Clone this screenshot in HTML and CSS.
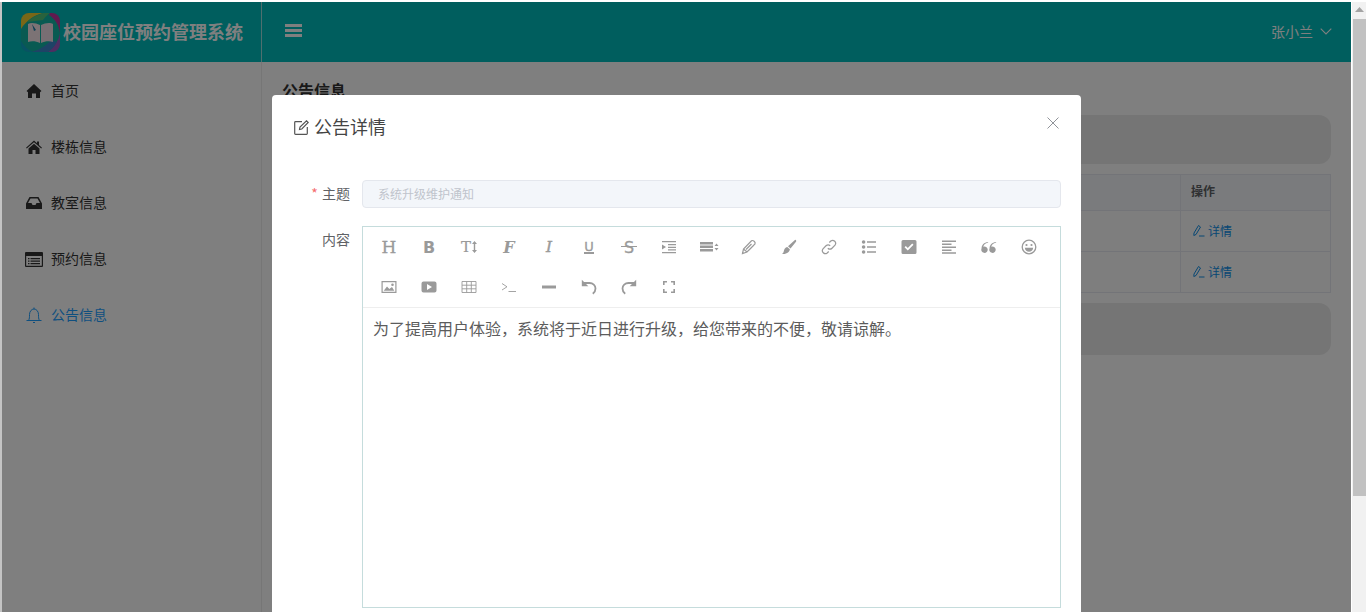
FILE: index.html
```html
<!DOCTYPE html>
<html lang="zh-CN">
<head>
<meta charset="utf-8">
<title>校园座位预约管理系统</title>
<link rel="stylesheet" href="styles.css">
</head>
<body>
<div class="window">
  <div class="app">
    <header class="topbar">
      <div class="brand">
        <svg class="logo" viewBox="0 0 39 39">
          <defs><clipPath id="lc"><rect width="39" height="39" rx="8"/></clipPath></defs>
          <g clip-path="url(#lc)">
            <rect width="39" height="39" fill="#12b5a5"/>
            <path d="M0 0H22C13 2 5 8 0 16Z" fill="#f2cf2e"/>
            <path d="M22 0H29C26 2 24 4 22 7L6 9C10 5 16 2 22 0Z" fill="#52c47a"/>
            <path d="M29 0H39V20C38 12 34 6 28 2Z" fill="#c0359f"/>
            <path d="M39 20V39H27C33 34 38 27 39 20Z" fill="#9a5cc4"/>
            <path d="M10 39C18 37 25 33 30 27L36 29C33 34 30 37 27 39Z" fill="#3d86cc"/>
            <path d="M0 28C3 33 7 37 12 39H0Z" fill="#0fa6c8"/>
          </g>
          <path d="M7 11C10 9 15 10 19 12V30C15 28 10 28 7 29Z" fill="#f8e6ea"/>
          <path d="M32 11C29 9 24 10 20 12V30C24 28 29 28 32 29Z" fill="#f0dce6"/>
          <path d="M11 11L15 17L13 18Z" fill="#1e7fa8"/>
        </svg>
        <span class="brand-name">校园座位预约管理系统</span>
      </div>
      <div class="topbar-main">
        <svg class="bars" viewBox="0 0 17 13"><path d="M0 0H17V3H0ZM0 5H17V8H0ZM0 10H17V13H0Z"/></svg>
        <div class="user">
          <span>张小兰</span>
          <svg class="chevron" viewBox="0 0 12 7"><path d="M.7.7 6 6 11.3.7"/></svg>
        </div>
      </div>
    </header>
    <div class="body">
      <nav class="sidebar">
        <a class="nav-item">
          <svg class="nav-icon" viewBox="0 0 16 16"><path d="M8 1 15.5 8 14 9.3V15H10V10.5H6V15H2V9.3L.5 8Z"/></svg>
          <span>首页</span>
        </a>
        <a class="nav-item">
          <svg class="nav-icon" viewBox="0 0 16 16"><path d="M8 1.5 11 4.2V2.5H13V6L16 8.7 15.2 9.6 8 3.3 .8 9.6 0 8.7ZM8 4.8 13.5 9.5V15H9.5V11H6.5V15H2.5V9.5Z"/></svg>
          <span>楼栋信息</span>
        </a>
        <a class="nav-item">
          <svg class="nav-icon" viewBox="0 0 16 16"><path fill-rule="evenodd" d="M3.5 2H12.5L16 8.5V14H0V8.5ZM4.5 3.5 2 8H5.5L6.5 10H9.5L10.5 8H14L11.5 3.5Z"/></svg>
          <span>教室信息</span>
        </a>
        <a class="nav-item">
          <svg class="nav-icon nav-icon-wide" viewBox="0 0 18 15"><path fill-rule="evenodd" d="M1 0H17A1 1 0 0 1 18 1V14A1 1 0 0 1 17 15H1A1 1 0 0 1 0 14V1A1 1 0 0 1 1 0ZM1.2 4V13.8H16.8V4ZM3 6H4.5V7.2H3ZM5.5 6H15V7.2H5.5ZM3 8.5H4.5V9.7H3ZM5.5 8.5H15V9.7H5.5ZM3 11H4.5V12.2H3ZM5.5 11H15V12.2H5.5Z"/></svg>
          <span>预约信息</span>
        </a>
        <a class="nav-item is-active">
          <svg class="nav-icon nav-icon-line" viewBox="0 0 16 16"><path d="M.5 13.5H15.5M2.5 13.5C3.5 12 3.5 10 3.5 7.5 3.5 4.5 5.5 2 8 2S12.5 4.5 12.5 7.5C12.5 10 12.5 12 13.5 13.5M7 15.5H9M8 .5V2"/></svg>
          <span>公告信息</span>
        </a>
      </nav>
      <main class="content">
        <h1 class="page-title">公告信息</h1>
        <div class="panel panel-search"></div>
        <table class="grid">
          <thead><tr><th></th><th class="col-op">操作</th></tr></thead>
          <tbody>
            <tr><td></td><td><a class="op-link"><svg class="op-icon" viewBox="0 0 13 13"><path d="M6.5 1.5 8.5 3 4 10.5 1.8 11.5 2 9ZM7 12H12.5"/></svg>详情</a></td></tr>
            <tr><td></td><td><a class="op-link"><svg class="op-icon" viewBox="0 0 13 13"><path d="M6.5 1.5 8.5 3 4 10.5 1.8 11.5 2 9ZM7 12H12.5"/></svg>详情</a></td></tr>
          </tbody>
        </table>
        <div class="panel panel-pager"></div>
      </main>
    </div>
    <div class="mask">
      <section class="dialog">
        <div class="dialog-head">
          <svg class="dialog-icon" viewBox="0 0 15 15"><path d="M8 1.7H1.5A.8.8 0 0 0 .7 2.5V13.5A.8.8 0 0 0 1.5 14.3H12.5A.8.8 0 0 0 13.3 13.5V7M5.5 9.500 6 7 12.500 .8 14.200 2.500 7.800 9Z"/></svg>
          <span class="dialog-title">公告详情</span>
          <svg class="dialog-close" viewBox="0 0 12 12"><path d="M.5.5 11.500 11.500M11.500.5 .5 11.500"/></svg>
        </div>
        <div class="form-row">
          <label class="form-label"><i class="req">*</i> 主题</label>
          <div class="form-input">系统升级维护通知</div>
        </div>
        <div class="form-row form-row-editor">
          <label class="form-label">内容</label>
          <div class="editor">
            <div class="toolbar">
              <span class="tool"><span class="tx tx-h">H</span></span>
              <span class="tool"><span class="tx tx-b">B</span></span>
              <span class="tool"><span class="tx tx-t">T</span><svg class="tool-arrow" viewBox="0 0 5 12"><path d="M2.5 0 5 3H3.2V9H5L2.5 12 0 9H1.8V3H0Z"/></svg></span>
              <span class="tool"><span class="tx tx-f">F</span></span>
              <span class="tool"><span class="tx tx-i">I</span></span>
              <span class="tool"><span class="tx tx-u">U</span></span>
              <span class="tool"><span class="tx tx-s">S</span></span>
              <span class="tool"><svg class="ic" viewBox="0 0 16 16"><path d="M1 2H15V3.3H1ZM7 5H15V6.3H7ZM7 7.7H15V9H7ZM7 10.3H15V11.6H7ZM1 13H15V14.3H1ZM1 5.5 5 8 1 10.5Z"/></svg></span>
              <span class="tool"><svg class="ic ic-wide" viewBox="0 0 20 16"><path d="M1 3H14V5.5H1ZM1 6.5H14V9H1ZM1 10H14V12.5H1ZM17.5 4.5 19.5 7H15.5ZM15.5 9H19.5L17.5 11.5Z"/></svg></span>
              <span class="tool"><svg class="ic ic-line" viewBox="0 0 16 16"><path d="M1.5 14.500 2.500 10 10.500 1.800C12 .8 14.800 3 14 5L6 13ZM2.500 10 6 13M5 10.500 10.500 5M7.500 11.500 12.500 6.500"/></svg></span>
              <span class="tool"><svg class="ic" viewBox="0 0 16 16"><path d="M14.2.8C15.2 1.2 15.5 2 15 2.8L9.5 9.5 7 7.3ZM6.3 8 8.9 10.3C8.6 12.8 6 15.5 1 15 3 13.5 2.5 12.5 3.3 10.5 4 9 5.2 8.2 6.3 8Z"/></svg></span>
              <span class="tool"><svg class="ic ic-line" viewBox="0 0 16 16"><path d="M6.8 9.2A3 3 0 0 0 11 9.2L14 6.2A3 3 0 0 0 9.8 2L8.3 3.5M9.2 6.8A3 3 0 0 0 5 6.8L2 9.8A3 3 0 0 0 6.2 14L7.7 12.5"/></svg></span>
              <span class="tool"><svg class="ic" viewBox="0 0 16 16"><path d="M.8 3A1.8 1.8 0 1 1 4.4 3 1.8 1.8 0 1 1 .8 3ZM.8 8A1.8 1.8 0 1 1 4.4 8 1.8 1.8 0 1 1 .8 8ZM.8 13A1.8 1.8 0 1 1 4.4 13 1.8 1.8 0 1 1 .8 13ZM6 2.2H15V3.7H6ZM6 7.2H15V8.7H6ZM6 12.2H15V13.7H6Z"/></svg></span>
              <span class="tool"><svg class="ic" viewBox="0 0 16 16"><path fill-rule="evenodd" d="M2 1H14A1.5 1.5 0 0 1 15.5 2.5V13.5A1.5 1.5 0 0 1 14 15H2A1.5 1.5 0 0 1 .5 13.5V2.5A1.5 1.5 0 0 1 2 1ZM3.5 8.2 6.8 11.5 12.5 5.8 11.2 4.6 6.8 9 4.8 7Z"/></svg></span>
              <span class="tool"><svg class="ic" viewBox="0 0 16 16"><path d="M1 1.5H15V3H1ZM1 4.5H10.5V6H1ZM1 7.5H15V9H1ZM1 10.5H10.5V12H1ZM1 13.3H15V14.8H1Z"/></svg></span>
              <span class="tool"><svg class="ic" viewBox="0 0 16 16"><path d="M7.3 3.500C4 4.300 2.500 6 2.300 7.700A3.200 3.200 0 1 1 .6 9.300C.6 6 3 3.500 7 3ZM15.300 3.500C12 4.300 10.500 6 10.300 7.700A3.200 3.200 0 1 1 8.600 9.300C8.600 6 11 3.500 15 3Z"/></svg></span>
              <span class="tool"><svg class="ic ic-smile" viewBox="0 0 16 16"><circle class="sm-line" cx="8" cy="8" r="6.8"/><circle cx="5.5" cy="6" r="1.1"/><circle cx="10.5" cy="6" r="1.1"/><path d="M3.8 8.8H12.2C12 11.5 10 12.8 8 12.8S4 11.5 3.8 8.8Z"/></svg></span>

              <span class="tool"><svg class="ic" viewBox="0 0 16 16"><path fill-rule="evenodd" d="M.5 2H15.5V14H.5ZM1.7 3.2V12.8H14.3V3.2ZM2.7 11.8 6 7.5 8.3 10 11 8 13.300 11.800ZM11.500 4.500A1.300 1.300 0 1 1 11.500 7.100 1.300 1.300 0 1 1 11.500 4.500Z"/></svg></span>
              <span class="tool"><svg class="ic" viewBox="0 0 16 16"><path fill-rule="evenodd" d="M2.5 2.5H13.5A2 2 0 0 1 15.5 4.5V11.5A2 2 0 0 1 13.5 13.5H2.5A2 2 0 0 1 .5 11.5V4.5A2 2 0 0 1 2.5 2.5ZM6 5V11L11 8Z"/></svg></span>
              <span class="tool"><svg class="ic ic-thin" viewBox="0 0 16 16"><path d="M1 2.5H15V13.5H1ZM1 6.2H15M1 9.8H15M5.7 2.5V13.5M10.3 2.5V13.5"/></svg></span>
              <span class="tool"><svg class="ic ic-thin" viewBox="0 0 16 16"><path d="M1 4.5 6 7.8 1 11M7.5 12.5H15"/></svg></span>
              <span class="tool"><svg class="ic" viewBox="0 0 16 16"><path d="M1 6.5H15V9.5H1Z"/></svg></span>
              <span class="tool"><svg class="ic" viewBox="0 0 16 16"><path class="arc" d="M3 4H8.500C12 4 14.500 6.500 14.500 9.500 14.500 11.500 13.500 13.500 11.800 14.800"/><path d="M.8 .8V7.300H7.300Z"/></svg></span>
              <span class="tool"><svg class="ic" viewBox="0 0 16 16"><path class="arc" d="M13 4H7.500C4 4 1.500 6.500 1.500 9.500 1.500 11.500 2.500 13.500 4.200 14.800"/><path d="M15.200 .8V7.300H8.700Z"/></svg></span>
              <span class="tool"><svg class="ic" viewBox="0 0 16 16"><path d="M2 2H6V3.6H3.6V6H2ZM10 2H14V6H12.4V3.6H10ZM2 10H3.6V12.4H6V14H2ZM12.4 10H14V14H10V12.4H12.4Z"/></svg></span>
            </div>
            <div class="editor-text">为了提高用户体验，系统将于近日进行升级，给您带来的不便，敬请谅解。</div>
          </div>
        </div>
      </section>
    </div>
  </div>
  <div class="scrollbar">
    <svg class="scroll-arrow" viewBox="0 0 9 5"><path d="M4.5 0 9 5H0Z"/></svg>
    <div class="scroll-thumb"></div>
  </div>
</div>
</body>
</html>
```
FILE: styles.css
```css
* { box-sizing: border-box; }
html, body { margin: 0; height: 100%; overflow: hidden; background: #fff; }
body { font-family: "Noto Sans CJK SC", "Liberation Sans", sans-serif; font-size: 14px; color: #333; }
svg { display: block; flex: none; }

.window { display: flex; height: 612px; border-top: 2px solid #fff; }
.app { position: relative; width: 1351px; height: 610px; border-left: 2px solid #c4c4c4; margin-right: 1px; display: flex; flex-direction: column; overflow: hidden; background: #fff; }

.topbar { display: flex; height: 60px; background: #00bcbc; color: #fff; flex: none; }
.brand { width: 260px; display: flex; align-items: center; gap: 3px; padding-left: 19px; border-right: 1px solid #9edede; }
.logo { width: 39px; height: 39px; }
.brand-name { font-size: 18px; font-weight: 700; white-space: nowrap; color: #fff; margin-bottom: 2px; }
.topbar-main { flex: 1; display: flex; align-items: center; justify-content: space-between; padding: 0 19px 0 23px; }
.bars { width: 17px; height: 13px; fill: #fff; margin-top: -3px; }
.user { display: flex; align-items: center; gap: 7px; font-size: 14px; margin-top: -2px; color: #fff; }
.chevron { width: 12px; height: 7px; fill: none; stroke: #fff; stroke-width: 1.1; }

.body { flex: 1; display: flex; min-height: 0; }
.sidebar { width: 260px; flex: none; padding-top: 1px; border-right: 1px solid #ededed; background: #fff; }
.nav-item { height: 56px; display: flex; align-items: center; gap: 9px; padding-left: 24px; color: #333; font-size: 14px; }
.nav-item span { margin-bottom: 2px; }
.nav-icon { width: 16px; height: 16px; fill: currentColor; }
.nav-icon-wide { width: 18px; height: 15px; margin-left: -1px; margin-right: -1px; }
.nav-icon-line { fill: none; stroke: currentColor; stroke-width: 1; }
.is-active { color: #1e9fff; }

.content { flex: 1; padding: 16px 20px 0; min-width: 0; }
.page-title { margin: 0; height: 37px; font-size: 16px; line-height: 24px; font-weight: 700; color: #333; }
.panel { background: #ebebeb; border-radius: 12px; }
.panel-search { height: 49px; margin-bottom: 10px; }
.panel-pager { height: 52px; margin-top: 10px; }
.grid { width: 100%; border-collapse: collapse; table-layout: fixed; font-size: 12px; }
.grid th, .grid td { border: 1px solid #e6e8f0; text-align: left; padding: 0 10px; }
.grid th { height: 36px; padding-bottom: 4px; background: #f5f7fa; color: #606266; font-weight: 700; }
.grid td { height: 41px; background: #fdfdfd; }
.col-op { width: 150px; }
.op-link { display: flex; align-items: center; gap: 3px; margin: 0 0 2px 1px; color: #0f8fe8; }
.op-icon { width: 13px; height: 13px; fill: none; stroke: currentColor; stroke-width: 1; }

.mask { position: absolute; inset: 0; background: rgba(0, 0, 0, .5); display: flex; justify-content: center; align-items: flex-start; padding-top: 93px; }
.dialog { width: 809px; height: 700px; background: #fff; border-radius: 4px 4px 0 0; flex: none; padding: 0 20px 0 0; }
.dialog-head { position: relative; height: 85px; display: flex; align-items: center; padding-left: 22px; padding-bottom: 21px; gap: 5px; }
.dialog-icon { width: 15px; height: 15px; fill: none; stroke: #555; stroke-width: 1.2; }
.dialog-title { font-size: 18px; color: #444; line-height: 24px; margin-bottom: 2px; }
.dialog-close { position: absolute; left: 775px; top: 22px; width: 12px; height: 12px; fill: none; stroke: #909399; stroke-width: 1; }

.form-row { display: flex; margin-bottom: 18px; }
.form-row-editor { margin-bottom: 0; }
.form-label { width: 78px; flex: none; text-align: right; font-size: 14px; color: #606266; line-height: 26px; margin-right: 12px; }
.req { color: #f56c6c; font-style: normal; margin-right: 1px; }
.form-input { flex: 1; height: 28px; line-height: 25px; background: #f3f6fa; border: 1px solid #e4e7ed; border-radius: 4px; padding-left: 15px; font-size: 12px; color: #c0c4cc; }

.editor { flex: 1; height: 382px; border: 1px solid #c5dcdc; }
.toolbar { display: flex; flex-wrap: wrap; padding: 0 6px; height: 81px; align-content: flex-start; border-bottom: 1px solid #eee; color: #9a9a9a; }
.tool { width: 40px; height: 40px; display: flex; align-items: center; justify-content: center; }
.ic { width: 16px; height: 16px; fill: #9a9a9a; }
.ic-wide { width: 20px; }
.ic-line, .ic-thin { fill: none; stroke: #9a9a9a; }
.ic-line { stroke-width: 1.2; }
.ic-thin { stroke-width: .9; }
.arc { fill: none; stroke: #9a9a9a; stroke-width: 1.8; }
.ic-smile .sm-line { fill: none; stroke: #9a9a9a; stroke-width: 1.3; }
.tx { line-height: 1; color: #9a9a9a; }
.tx-h { font: 17px "DejaVu Serif", serif; -webkit-text-stroke: .3px #9a9a9a; }
.tx-b { font: 700 16px "DejaVu Sans", sans-serif; }
.tx-t { font: 15px "DejaVu Serif", serif; -webkit-text-stroke: .2px #9a9a9a; }
.tool-arrow { width: 5px; height: 12px; fill: #9a9a9a; margin-left: 1px; }
.tx-f { font: italic 700 16px "DejaVu Serif", serif; }
.tx-i { font: italic 15px "DejaVu Serif", serif; -webkit-text-stroke: .5px #9a9a9a; }
.tx-u { font: 13px "DejaVu Sans", sans-serif; -webkit-text-stroke: .3px #9a9a9a; border-bottom: 2px solid #9a9a9a; height: 13px; line-height: 11px; }
.tx-s { position: relative; font: 16px "DejaVu Sans", sans-serif; -webkit-text-stroke: .3px #9a9a9a; }
.tx-s::after { content: ""; position: absolute; left: -3px; right: -3px; top: 8px; height: 1.5px; background: #9a9a9a; }
.editor-text { padding: 8px 10px; font-size: 16px; line-height: 24px; color: #5c5c5c; }

.scrollbar { flex: 1; background: #f1f1f1; position: relative; padding-left: 1px; }
.scroll-arrow { width: 9px; height: 5px; fill: #a3a3a3; margin: 5px 0 0 2px; }
.scroll-thumb { height: 477px; margin-top: 7px; background: #c1c1c1; }
```
